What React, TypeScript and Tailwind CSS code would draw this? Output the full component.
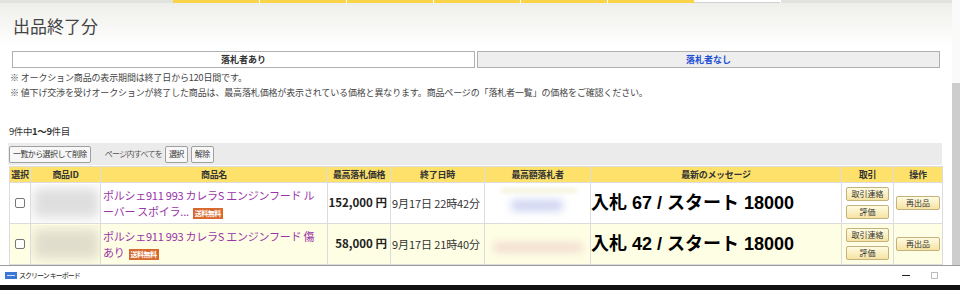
import React from "react";

const jp = "font-['Noto_Sans_CJK_JP','Noto_Sans',sans-serif]";

function YBtn({ children, w }: { children: React.ReactNode; w: string }) {
  return (
    <div
      className={`${w} h-[14px] flex items-center justify-center rounded-[2px] border border-[#c4b27c] bg-gradient-to-b from-[#fffbe2] to-[#f6e3a2] text-[8px] leading-none text-[#333]`}
    >
      {children}
    </div>
  );
}

function GBtn({ children }: { children: React.ReactNode }) {
  return (
    <div className="h-[17px] px-[3px] flex items-center rounded-[2px] border border-[#a0a0a0] bg-[#f7f7f7] text-[8px] tracking-[-0.6px] leading-none text-[#333]">
      {children}
    </div>
  );
}

function Badge() {
  return (
    <span className="inline-block align-middle ml-[4px] bg-[#d8682d] px-[2px] text-[7px] leading-[11px] font-bold text-white tracking-[-0.5px]">
      送料無料
    </span>
  );
}

function Row({
  bg,
  line1,
  line2,
  price,
  date,
  msg,
  idBlob,
  bidder,
}: {
  bg: string;
  line1: string;
  line2: string;
  price: string;
  date: string;
  msg: string;
  idBlob: string;
  bidder: React.ReactNode;
}) {
  const td = "border border-[#dcdcdc] p-0 align-middle";
  return (
    <tr className={`${bg} h-[41px]`}>
      <td className={td}>
        <div className="mx-auto w-[10px] h-[10px] rounded-[2px] border border-[#767676] bg-white" />
      </td>
      <td className={td}>
        <div className="flex items-center justify-center overflow-hidden h-[39px]">
          <div className={`w-[66px] h-[30px] rounded ${idBlob} blur-[6px]`} />
        </div>
      </td>
      <td className={`${td} pl-[2px] pr-[2px]`}>
        <div className="text-[11px] tracking-[-0.25px] leading-[16px] text-[#9a35a8] whitespace-pre overflow-hidden">
          <div>{line1}</div>
          <div>
            {line2}
            <Badge />
          </div>
        </div>
      </td>
      <td className={`${td} text-right pr-[3px] text-[11.5px] font-bold text-[#222] whitespace-nowrap`}>{price}</td>
      <td className={`${td} pl-[1px] text-[11px] tracking-[-0.1px] text-[#333] whitespace-nowrap overflow-hidden`}>{date}</td>
      <td className={td}>
        <div className="relative h-[39px] overflow-hidden">{bidder}</div>
      </td>
      <td className={`${td} pl-0`}>
        <div className={`text-[18px] font-bold text-black whitespace-nowrap font-['Liberation_Sans','Noto_Sans_CJK_JP',sans-serif]`}>
          {msg}
        </div>
      </td>
      <td className={td}>
        <div className="flex flex-col items-center gap-[4px]">
          <YBtn w="w-[43px]">取引連絡</YBtn>
          <YBtn w="w-[43px]">評価</YBtn>
        </div>
      </td>
      <td className={td}>
        <div className="flex justify-center">
          <YBtn w="w-[44px]">再出品</YBtn>
        </div>
      </td>
    </tr>
  );
}

export default function App() {
  const th = "border border-[#dcdcdc] p-0 text-[9px] tracking-[-0.3px] font-bold text-[#333] text-center whitespace-nowrap overflow-hidden";
  return (
    <div className={`w-[960px] h-[290px] overflow-hidden bg-white ${jp}`}>
      <div className="flex h-[265px] overflow-hidden">
        <div className="w-[952px] flex flex-col">
          {/* top tab strip */}
          <div className="flex h-[3px] shrink-0">
            <div className="w-[173px] bg-[#e2e2de]" />
            <div className="w-[86px] bg-[#f9d348]" />
            <div className="w-[1px] bg-white" />
            <div className="w-[86px] bg-[#f9d348]" />
            <div className="w-[1px] bg-white" />
            <div className="w-[86px] bg-[#f9d348]" />
            <div className="w-[1px] bg-white" />
            <div className="w-[86px] bg-[#f9d348]" />
            <div className="w-[1px] bg-white" />
            <div className="w-[86px] bg-[#f9d348]" />
            <div className="w-[1px] bg-white" />
            <div className="w-[86px] bg-[#f9d348]" />
            <div className="w-[86px] bg-white border-b border-[#d0d0d0]" />
            <div className="w-[1px] bg-white" />
            <div className="flex-1 bg-[#e2e2de]" />
          </div>
          {/* header */}
          <div className="h-[42px] shrink-0 bg-gradient-to-b from-[#eeeeea] to-white flex items-center pl-[13px] pt-[3px]">
            <span className="text-[17px] leading-none text-[#444]">出品終了分</span>
          </div>
          {/* tabs */}
          <div className="mt-[6px] mx-[12px] flex gap-[2px] h-[17px] shrink-0">
            <div className="flex-1 border border-[#b0b0b0] bg-white flex items-center justify-center text-[9px] font-bold text-[#333]">
              落札者あり
            </div>
            <div className="flex-1 border border-[#b0b0b0] bg-[#eeeeee] flex items-center justify-center text-[9px] font-bold text-[#1b4fd6]">
              落札者なし
            </div>
          </div>
          {/* notes */}
          <div className="pl-[10px] mt-[2px] text-[9px] tracking-[-0.15px] text-[#444] leading-[15px]">
            <div>※ オークション商品の表示期間は終了日から120日間です。</div>
            <div>
              ※ 値下げ交渉を受けオークションが終了した商品は、最高落札価格が表示されている価格と異なります。商品ページの「落札者一覧」の価格をご確認ください。
            </div>
          </div>
          <div className="pl-[9px] mt-[23px] h-[16px] text-[9.5px] tracking-[-0.4px] leading-[16px] text-[#333]">
            9件中<span className="font-bold">1〜9</span>件目
          </div>
          {/* action bar */}
          <div className="mt-[4px] ml-[8px] mr-[10px] h-[22px] bg-[#ebebeb] flex items-center pl-[1px] shrink-0">
            <GBtn>一覧から選択して削除</GBtn>
            <span className="ml-[14px] mr-[3px] text-[8px] tracking-[-0.7px] text-[#555]">ページ内すべてを</span>
            <GBtn>選択</GBtn>
            <div className="w-[3px]" />
            <GBtn>解除</GBtn>
          </div>
          {/* table */}
          <table className="mt-[1px] ml-[9px] w-[933px] table-fixed border-collapse shrink-0">
            <colgroup>
              <col className="w-[21px]" />
              <col className="w-[70px]" />
              <col className="w-[227px]" />
              <col className="w-[63px]" />
              <col className="w-[94px]" />
              <col className="w-[106px]" />
              <col className="w-[251px]" />
              <col className="w-[52px]" />
              <col className="w-[49px]" />
            </colgroup>
            <thead>
              <tr className="h-[16px] bg-[#fde16b]">
                <th className={th}>選択</th>
                <th className={th}>商品ID</th>
                <th className={th}>商品名</th>
                <th className={th}>最高落札価格</th>
                <th className={th}>終了日時</th>
                <th className={th}>最高額落札者</th>
                <th className={th}>最新のメッセージ</th>
                <th className={th}>取引</th>
                <th className={th}>操作</th>
              </tr>
            </thead>
            <tbody>
              <Row
                bg="bg-white"
                idBlob="bg-[#dedede]"
                line1="ポルシェ911 993 カレラS エンジンフード ル"
                line2="ーバー スポイラ..."
                price="152,000 円"
                date="9月17日 22時42分"
                msg="入札 67 / スタート 18000"
                bidder={
                  <>
                    <div className="absolute left-[16px] top-[5px] w-[76px] h-[3px] bg-[#f1ecc8] blur-[2px]" />
                    <div className="absolute left-[26px] top-[16px] w-[52px] h-[11px] rounded bg-[#cdd3f2] blur-[4px]" />
                  </>
                }
              />
              <Row
                bg="bg-[#fefee4]"
                idBlob="bg-[#e0ddcc]"
                line1="ポルシェ911 993 カレラS エンジンフード 傷"
                line2="あり"
                price="58,000 円"
                date="9月17日 21時40分"
                msg="入札 42 / スタート 18000"
                bidder={
                  <div className="absolute left-[8px] top-[18px] w-[90px] h-[9px] rounded bg-[#f1d9cd] blur-[4px]" />
                }
              />
            </tbody>
          </table>
        </div>
        {/* scrollbar */}
        <div className="w-[8px] flex flex-col">
          <div className="h-[83px] bg-[#fafafa]" />
          <div className="flex-1 bg-[#cdcdcd]" />
        </div>
      </div>
      {/* on-screen keyboard window */}
      <div className="h-[20px] border-t border-[#9c9c9c] bg-white flex items-center">
        <div className="ml-[5px] w-[12px] h-[7px] bg-[#3b78d6] flex items-center justify-center">
          <div className="w-[8px] h-[1px] bg-[#cfe0fb]" />
        </div>
        <span className="ml-[2px] text-[7px] tracking-[-1px] text-[#222] leading-none whitespace-pre">スクリーン  キーボード</span>
        <div className="flex-1" />
        <div className="w-[8px] h-[1px] bg-[#222]" />
        <div className="ml-[21px] mr-[22px] w-[7px] h-[7px] border border-[#bdbdbd]" />
      </div>
      <div className="h-[5px] bg-[#111]" />
    </div>
  );
}
